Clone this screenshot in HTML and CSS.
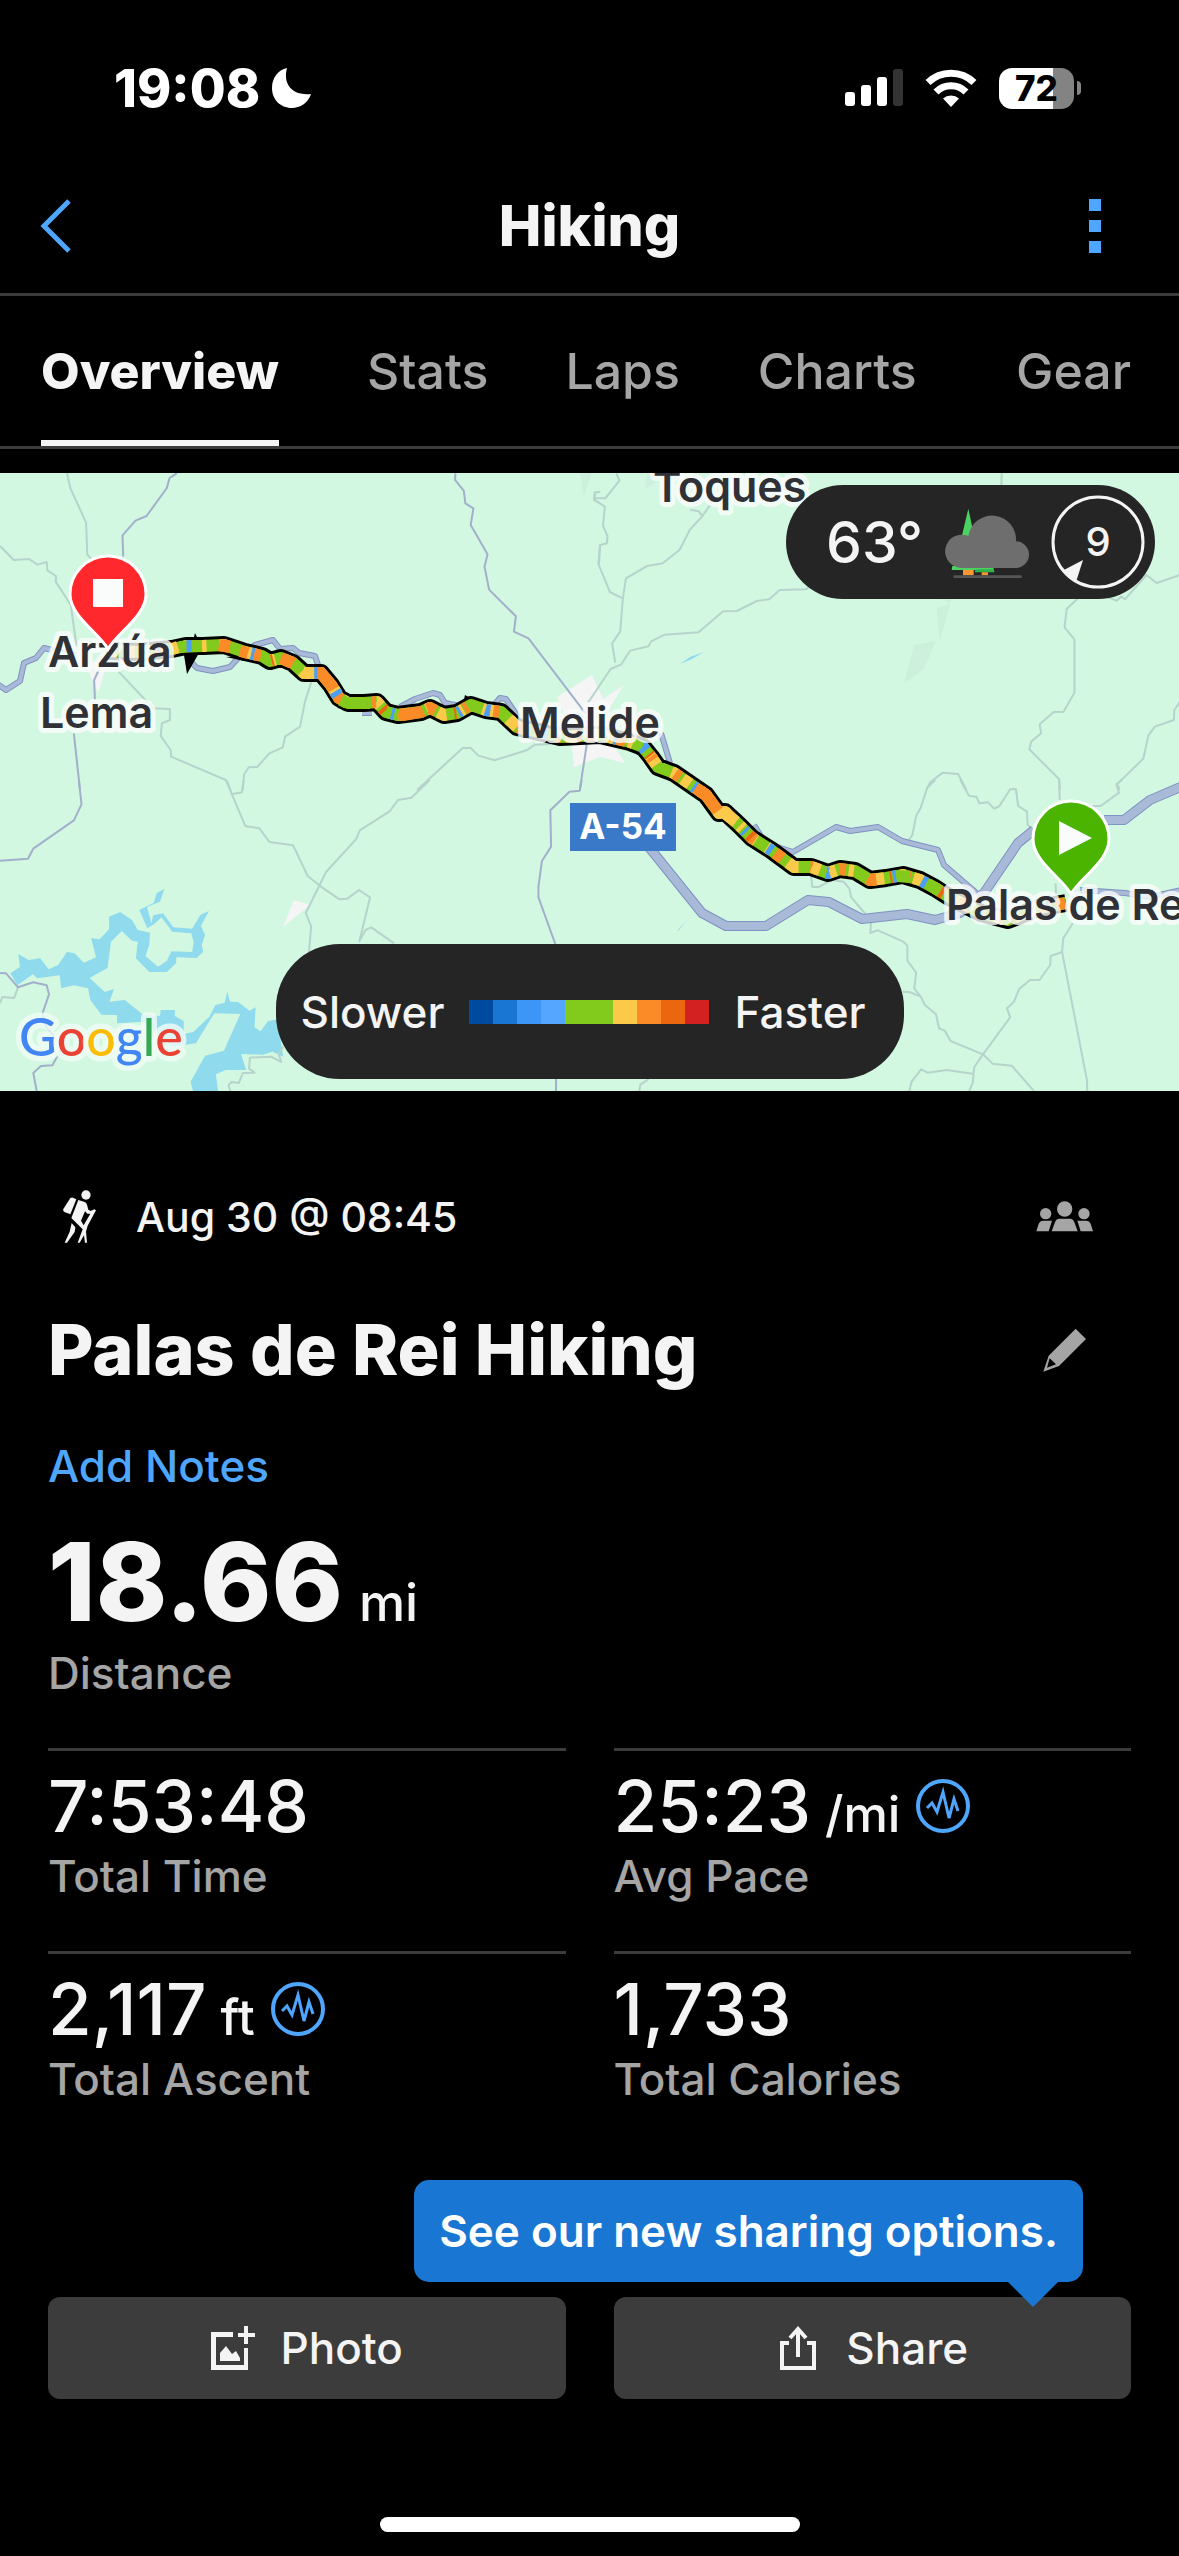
FILE: index.html
```html
<!DOCTYPE html>
<html lang="en">
<head>
<meta charset="utf-8">
<meta name="viewport" content="width=device-width, initial-scale=1">
<title>Hiking</title>
<link rel="stylesheet" href="styles.css">
</head>
<body>
<div class="status">
  <div class="status-left">
    <span class="time">19:08</span>
    <svg width="40" height="40" viewBox="0 0 40 40" aria-hidden="true"><path d="M15 0C11 14 18 28 39 26C36 35 28 40 20 40C8 40 0 31 0 20C0 10 6 2 15 0Z" fill="#fff"/></svg>
  </div>
  <div class="status-right">
    <svg width="58" height="38" viewBox="0 0 58 38" aria-hidden="true"><g fill="#fff"><rect y="23" width="10" height="14" rx="3"/><rect x="16" y="16" width="10" height="21" rx="3"/><rect x="32" y="8" width="10" height="29" rx="3"/><rect x="48" width="10" height="37" rx="3" fill="#333"/></g></svg>
    <svg width="52" height="38" viewBox="0 0 52 38" aria-hidden="true"><g fill="none" stroke="#fff" stroke-width="7"><path d="M3 13.500A33 33 0 0 1 49 13.500"/><path d="M11 23A21 21 0 0 1 41 23"/></g><path d="M26 38L18 29.500A12 12 0 0 1 34 29.500Z" fill="#fff"/></svg>
    <div class="battery"><span class="battery-body">72</span><span class="battery-tip"></span></div>
  </div>
</div>

<header class="header">
  <button class="icon-button" aria-label="Back"><svg width="32" height="54" viewBox="0 0 32 54"><path d="M29 2L4 27L29 52" fill="none" stroke="#4fa6ff" stroke-width="5"/></svg></button>
  <h1 class="header-title">Hiking</h1>
  <button class="icon-button more" aria-label="More"><svg width="12" height="54" viewBox="0 0 12 54"><path d="M0 0h12v12H0zM0 21h12v12H0zM0 42h12v12H0z" fill="#4fa6ff"/></svg></button>
</header>

<nav class="tabs">
  <a class="tab tab-active" href="#overview">Overview</a>
  <a class="tab" href="#stats">Stats</a>
  <a class="tab" href="#laps">Laps</a>
  <a class="tab" href="#charts">Charts</a>
  <a class="tab" href="#gear">Gear</a>
</nav>

<section class="map" aria-label="Route map">
  <svg class="map-canvas" viewBox="0 0 1179 618">
    <defs>
      <path id="route" d="M108 178L140 179L172 176L186 173L203 173L224 172L245 179L262 183L270 188L281 185L293 190L304 200L321 200L331 212L339 225L348 230L364 230L377 229L386 239L398 242L421 239L430 235L444 242L457 240L471 232L486 237L501 239L517 254L560 264L600 262L630 269L643 274L651 284L658 294L674 300L706 322L719 340L725 339L739 352L752 365L771 377L794 394L811 394L828 400L840 396L855 398L870 407L886 405L903 402L920 407L935 415L949 424L981 440L1008 447L1038 435L1066 430"/>
      <path id="pin" d="M0 0C-10 -17 -38 -33 -38 -55A38 38 0 0 1 38 -55C38 -33 10 -17 0 0Z"/>
      <path id="highway" d="M-4 210L6 217L20 208L24 190L36 185L44 175L52 177M190 188L197 195L213 198L230 194L240 183L255 172L273 167L280 176L293 175L299 180L315 183L319 195M362 240L372 240M400 234L415 226L433 220L440 222L445 230L465 234M494 232L500 225L506 226L518 244M661 260L670 290M754 352L765 370L793 379L836 354L850 358L878 354L902 368L938 377L944 392L980 423M1080 417L1125 420L1150 424L1190 415"/>
      <path id="motorway" d="M640 363L702 440L726 453L766 453L808 427L829 429L862 446L907 441L935 447L960 440L984 420L1018 370L1034 357M1104 347L1124 347L1150 327L1190 310"/>
    </defs>
    <g class="shade" transform="translate(580 -13) scale(.3827 .3333)"><path d="M932 443L968 430L940 543ZM873 555L930 543L900 625L846 672ZM945 417L970 420L968 432ZM0 40L30 40L10 108ZM175 40L205 40L200 65L170 88Z"/></g>
    <g class="town">
      <path d="M85 190L108 188L98 220ZM557 224L592 202L603 226L624 212L600 250L625 290L600 284L574 294L570 255ZM294 427L310 432L283 454Z"/>
    </g>
    <g class="water" transform="translate(0 307) scale(.3827 .3333)">
      <path d="M48 522L75 540L105 535L127 568L152 555L175 516L195 520L219 548L251 532L238 474L260 478L285 448L285 410L314 396L345 420L360 450L392 458L390 495L380 528L413 560L436 542L448 514L502 516L506 487L500 460L450 455L422 412L403 432L385 445L364 390L402 368L409 340L430 326L418 365L384 381L396 430L400 406L426 400L453 442L502 446L524 404L546 393L525 438L536 465L527 495L531 515L514 534L461 532L460 550L436 576L390 576L355 535L360 485L345 482L318 453L290 485L281 564L234 594L274 636L298 627L286 665L326 660L375 705L418 708L420 690L457 690L457 708L480 723L480 762L505 756L547 710L563 675L587 668L594 635L601 665L622 666L652 692L668 682L665 742L681 754L700 724L725 718L740 830L712 815L686 824L630 822L643 870L590 870L564 883L570 933L504 933L498 905L536 827L585 812L628 702L560 700L512 790L450 800L375 725L306 730L306 705L265 704L236 660L230 625L193 616L160 625L156 586L97 595L86 583L45 616L27 580L52 561Z"/>
    </g>
    <g class="water"><path d="M680 191L690 184L704 179L692 186ZM677 458L687 447L679 457Z"/></g>

    <g class="minor" transform="translate(0 -13) scale(.3827 .3333)">
      <path d="M175 40L184 85L225 188L228 283L240 300M0 258L36 300L76 297L98 314L122 306L124 331L146 348L146 366L185 435L200 560M310 635L400 745L444 747L444 780L423 790L420 828L446 870L447 890L590 960L602 990M815 660L797 725L784 800L745 830L739 862L704 880L672 921L650 922L638 943L634 990M1090 990L1209 864L1230 864L1250 887L1292 901L1376 871L1398 854L1440 852M1568 95L1554 98L1552 120L1568 130M1568 255L1565 315"/>
    </g>
    <g class="minor" transform="translate(580 -13) scale(.3827 .3333)">
      <path d="M95 40L103 62L66 115L38 115L40 95M38 120L65 140L60 198L72 228L70 250L52 256L48 312L78 396L112 415M340 135L320 168L288 208L260 270L216 310L176 318L120 355L112 415L105 515L84 550L92 608M320 168L310 154L288 149M600 380L590 388L522 390L494 418L462 423L410 453L374 454L310 517L221 524L186 544L179 559L131 572L108 613L80 627L20 730M1102 40L1101 80M1568 345L1507 369L1480 345L1424 418L1415 410L1402 422L1380 412M1300 416L1272 446L1266 502L1292 538L1292 698L1263 756L1238 756L1201 793L1205 820L1179 845L1174 868L1252 958L1254 990M1568 725L1553 750L1552 780L1502 800L1485 827L1472 896L1404 972L1410 990M907 985L915 967L948 938L988 942L1010 990"/>
    </g>
    <g class="minor" transform="translate(0 307) scale(.3827 .3333)">
      <path d="M592 0L606 43L632 37L637 0M606 43L641 138L678 145L704 186L766 196L804 288L834 316L887 358L908 356L938 330L967 352L939 484L955 450L970 442L1030 490M1123 0L1075 53L1040 60L1018 94L940 151L931 177L852 276L799 399L813 439L807 520M0 670L6 651L37 654L47 622M740 800L728 822L735 846L708 830L653 833L651 866L665 878L635 879L624 909L605 906L597 916L602 933"/>
    </g>
    <g class="minor" transform="translate(580 307) scale(.382 .3333)">
      <path d="M930 0L909 23L892 83L880 108L870 165L860 182M995 0L1019 48L1038 50L1045 70L1068 67L1084 86L1098 78L1126 28L1141 27L1147 78L1170 95L1172 135L1182 145M1254 0L1256 60M1418 0L1404 13L1411 38L1363 78L1340 78M605 285L608 321L626 321L660 300L690 305L705 325L710 352L747 402L762 425L760 459L780 451L845 484L857 497L857 542L880 578L875 625L892 650L903 675L932 703L940 745L955 752L970 783L1055 823L1080 851L1130 857L1188 933M845 635L862 636L892 650M1290 430L1265 475L1262 516L1232 528L1231 555L1203 600L1178 600L1150 627L1136 665L1118 685L1126 712L1055 823L1032 862L1028 909L1019 933M1028 881L960 870L910 878L893 868L868 905L862 933M1262 516L1327 900L1328 933M1245 310L1246 340M155 933L158 914L180 897"/>
    </g>
    <g class="major" transform="translate(0 -13) scale(.3827 .3333)">
      <path d="M462 40L443 54L436 84L383 168L354 182L320 226L322 290M1190 40L1189 60L1212 93L1216 130L1237 145L1230 195L1274 283L1266 320L1278 389L1348 469L1343 515L1381 535L1530 760M258 630L246 660L248 720M193 820L209 990M1535 840L1515 990M130 565L200 580"/>
    </g>
    <g class="major" transform="translate(0 307) scale(.3827 .3333)">
      <path d="M206 0L213 73L193 121L87 206L73 236L0 242M0 579L16 580L47 622L87 607L122 616L128 643L111 700L120 740L163 800L137 856L107 858L87 879L96 933M1520 0L1515 32L1488 35L1438 91L1440 200L1416 243L1407 320L1407 352L1451 492M1453 895L1453 933"/>
    </g>
    <use href="#highway" class="highway-edge"/>
    <use href="#highway" class="highway-fill"/>
    <use href="#motorway" class="motorway-edge"/>
    <use href="#motorway" class="motorway-fill"/>

    <path d="M184 182L187 201L199 180ZM193 168L195 160L199 168ZM463 231L465 222L476 228ZM337 235L345 230L344 236ZM392 245L398 251L404 244ZM636 277L637 282L645 281ZM226 184L244 188L250 182Z"/>
    <use href="#route" class="route-outline"/>
    <use href="#route" class="route-base"/>
    <use href="#route" class="route-yellow"/>
    <use href="#route" class="route-orange"/>
    <use href="#route" class="route-deep"/>
    <g class="route-segment">
      <path class="seg-orange" d="M307 200L321 200L331 212L336 220M403 242L421 239L423 238M694 314L706 322L718 338M219 172L230 174M240 178L248 180M281 185L290 189"/>
      <path class="seg-yellow" d="M305 200L317 200M334 216L337 221M172 176L178 174M722 338L736 349M812 394L820 397M510 247L517 254"/>
      <path class="seg-green" d="M179 174L202 173M386 239L398 242M341 227L347 230M353 230L370 230M897 403L910 404M928 411L940 418"/>
    </g>
    <use href="#route" class="route-blue"/>

    <g class="label">
      <text x="48" y="194">Arzúa</text>
      <text x="40" y="255">Lema</text>
      <text x="520" y="265">Melide</text>
      <text x="653" y="29">Toques</text>
      <text x="946" y="447">Palas de Rei</text>
    </g>
    <rect x="570" y="330" width="106" height="48" fill="#3a78c8"/>
    <text class="shield" x="623" y="366">A-54</text>
    <g transform="translate(108 176)"><use href="#pin" class="pin" fill="#ff282d"/><rect x="-15" y="-70" width="30" height="28" fill="#fafcfb"/></g>
    <g transform="translate(1071 421)"><use href="#pin" class="pin" fill="#4ab400"/><path d="M-12 -73L21 -56L-12 -39Z" fill="#fafcfb"/></g>
    <text class="google" x="19" y="583"><tspan fill="#4285f4">G</tspan><tspan fill="#ea4335">o</tspan><tspan fill="#fbbc05">o</tspan><tspan fill="#4285f4">g</tspan><tspan fill="#34a853">l</tspan><tspan fill="#ea4335">e</tspan></text>
  </svg>

  <div class="weather">
    <span class="temperature">63°</span>
    <svg width="84" height="72" viewBox="0 0 252 216" aria-label="Cloudy"><path d="M70 8L88 92H50Z" fill="#4cd263"/><path d="M22 180H118V192H20ZM94 186H145L148 198H90Z" fill="#4cd263"/><path d="M94 190H145L148 199H90Z" fill="#2fb24a"/><path d="M54 192h32v16H54zM110 199h19v9h-19z" fill="#fa9632"/><rect x="25" y="208" width="206" height="8" rx="4" fill="#555"/><path d="M50 186A50 50 0 1 1 70 90A72 72 0 0 1 213 106A40 40 0 0 1 211 186Z" fill="#6e6e6e"/></svg>
    <span class="wind"><svg class="wind-ring" viewBox="0 0 94 94" aria-hidden="true"><circle cx="47" cy="47" r="45" fill="none" stroke="#f4f4f4" stroke-width="3"/><path d="M32 65L11 76L25 87Z" fill="#f4f4f4"/></svg>9</span>
  </div>
  <div class="legend">
    <span>Slower</span>
    <span class="scale" aria-hidden="true"><i class="c1"></i><i class="c2"></i><i class="c3"></i><i class="c4"></i><i class="c5"></i><i class="c6"></i><i class="c7"></i><i class="c8"></i><i class="c9"></i></span>
    <span>Faster</span>
  </div>
</section>

<main class="details">
  <div class="date-row">
    <svg class="hiker" width="33" height="54" viewBox="38 32 99 162" aria-hidden="true"><g fill="#f4f4f4"><circle cx="107" cy="47" r="14"/><path d="M60 56Q64 53 68 55L78 60L60 105L42 98Q37 95 39 89Z"/><path d="M84 62L103 68Q108 70 110 76L114 91L121 95L132 90L137 93L112 139L107 157L110 190H104L101 168L88 190H82L97 150L63 116ZM104 96L92 124L100 138L120 103L111 103Z" fill-rule="evenodd"/><path d="M64 131L75 144L73 158L50 190H43L58 157Z"/></g></svg>
    <time>Aug 30 @ 08:45</time>
    <button class="icon-button people" aria-label="Privacy"><svg width="58" height="32" viewBox="0 0 174 96"><g fill="#a5a5a5"><circle cx="86" cy="24" r="23"/><circle cx="29" cy="38" r="17"/><circle cx="144" cy="38" r="17"/><path d="M47 91L56 66Q60 53 70 53H102Q112 53 116 66L125 91ZM1 91L8 68Q12 59 20 59H48L38 91ZM171 91L164 68Q160 59 152 59H124L134 91Z"/></g></svg></button>
  </div>
  <div class="title-row">
    <h2 class="title">Palas de Rei Hiking</h2>
    <button class="icon-button pencil" aria-label="Edit name"><svg width="44" height="44" viewBox="0 0 132 132"><path d="M98 2L129 33L48 114L1 131L17 83ZM20 91L12 119L39 109Z" fill="#a5a5a5" fill-rule="evenodd"/></svg></button>
  </div>
  <a class="notes" href="#notes">Add Notes</a>
  <div class="distance"><span class="distance-value">18.66</span><span class="distance-unit">mi</span></div>
  <div class="stat-label">Distance</div>

  <div class="stats">
    <div class="stat">
      <div class="stat-value">7:53:48</div>
      <div class="stat-label">Total Time</div>
    </div>
    <div class="stat">
      <div class="stat-value">25:23<span class="unit">/mi</span><button class="icon-button chart" aria-label="Pace chart"><svg width="54" height="54" viewBox="0 0 54 54"><g fill="none" stroke="#4fa6ff"><circle cx="27" cy="27" r="25" stroke-width="4"/><path d="M11 29L16 24L21 33L27 13L33 39L38 20L42 32" stroke-width="3"/></g></svg></button></div>
      <div class="stat-label">Avg Pace</div>
    </div>
    <div class="stat">
      <div class="stat-value">2,117<span class="unit">ft</span><button class="icon-button chart" aria-label="Ascent chart"><svg width="54" height="54" viewBox="0 0 54 54"><g fill="none" stroke="#4fa6ff"><circle cx="27" cy="27" r="25" stroke-width="4"/><path d="M11 29L16 24L21 33L27 13L33 39L38 20L42 32" stroke-width="3"/></g></svg></button></div>
      <div class="stat-label">Total Ascent</div>
    </div>
    <div class="stat">
      <div class="stat-value">1,733</div>
      <div class="stat-label">Total Calories</div>
    </div>
  </div>

  <div class="actions">
    <button class="action"><svg width="44" height="45" viewBox="0 0 44 45" aria-hidden="true"><g fill="#f4f4f4"><path d="M0 6H22V11H5V39H33V22H37V44H0Z"/><path d="M33 0H37V7H44V11H37V18H33V11H27V7H33Z"/><path d="M9 27L15 20L21 28L25 25L29 32V35H9Z"/></g></svg>Photo</button>
    <div class="share-wrap">
      <button class="action"><svg width="44" height="45" viewBox="-4 0 44 45" aria-hidden="true"><g fill="none" stroke="#f4f4f4" stroke-width="4"><path d="M9 17H2V42H34V17H27M18 31V3M10 12L18 3L26 12"/></g></svg>Share</button>
      <div class="tooltip" role="status">See our new sharing options.</div>
    </div>
  </div>
</main>
<div class="home-bar"></div>
</body>
</html>
```

FILE: styles.css
```css
* { box-sizing: border-box; }

body {
  margin: 0;
  background: #000;
  color: #f4f4f4;
  font-family: Inter, "Liberation Sans", sans-serif;
}

button { font: inherit; color: inherit; border: 0; cursor: pointer; }
svg { display: block; }
.icon-button { background: none; padding: 0; }

/* Status bar */
.status {
  display: flex;
  justify-content: space-between;
  align-items: center;
  height: 158px;
  padding: 18px 98px 0 114px;
  color: #fff;
}
.status-left { display: flex; align-items: center; gap: 12px; }
.time { font-size: 52px; font-weight: 800; }
.status-right { display: flex; align-items: center; gap: 22px; }
.battery { display: flex; align-items: center; gap: 3px; }
.battery-body {
  width: 75px;
  height: 41px;
  border-radius: 13px;
  background: linear-gradient(90deg, #fff 72%, #838383 72%);
  color: #000;
  font-size: 35px;
  font-weight: 800;
  line-height: 41px;
  text-align: center;
}
.battery-tip { width: 4px; height: 14px; border-radius: 0 4px 4px 0; background: #838383; }

/* Header */
.header {
  display: grid;
  grid-template-columns: 1fr auto 1fr;
  justify-items: start;
  align-items: center;
  height: 138px;
  padding: 0 40px;
  border-bottom: 3px solid #3c3c3c;
}
.header-title { margin: 0; font-size: 57px; font-weight: 800; line-height: 68px; }
.more { justify-self: end; margin-right: 38px; }

.tabs {
  display: grid;
  grid-template-columns: 327fr 199fr 193fr 259fr 112fr;
  justify-items: start;
  height: 153px;
  padding: 0 48px 0 41px;
  border-bottom: 3px solid #3c3c3c;
  margin-bottom: 24px;
}
.tab {
  color: #a5a5a5;
  font-size: 50px;
  font-weight: 500;
  line-height: 150px;
  text-decoration: none;
  white-space: nowrap;
}
.tab-active { color: #f4f4f4; font-weight: 800; box-shadow: inset 0 -6px #f4f4f4; }

/* Map */
.map { position: relative; overflow: hidden; background: #d2f8e1; }
.map-canvas { width: 100%; height: auto; }
.map-canvas path { vector-effect: non-scaling-stroke; }
.shade { fill: #cdf0dc; }
.town { fill: #f5f5f5; }
.water { fill: #90daee; }
.minor { fill: none; stroke: #b6d3cc; stroke-width: 2; stroke-linejoin: round; }
.major { fill: none; stroke: #a2b0cb; stroke-width: 2; stroke-linejoin: round; }
.highway-edge { fill: none; stroke: #7f92c1; stroke-width: 6; stroke-linejoin: round; }
.highway-fill { fill: none; stroke: #a9b9d8; stroke-width: 4; stroke-linejoin: round; }
.motorway-edge { fill: none; stroke: #7f92c1; stroke-width: 10; stroke-linejoin: round; }
.motorway-fill { fill: none; stroke: #a9b9d8; stroke-width: 8; stroke-linejoin: round; }
.route-outline, .route-base, .route-yellow, .route-orange, .route-blue, .route-deep { fill: none; stroke-linejoin: round; }
.route-outline { stroke: #000; stroke-width: 18; }
.route-base { stroke: #82cb1c; stroke-width: 12; }
.route-yellow { stroke: #fbca4b; stroke-width: 12; stroke-dasharray: 9 13 5 21 12 17 4 9; }
.route-orange { stroke: #fa8b27; stroke-width: 12; stroke-dasharray: 0 15 6 24 9 31 4 12; }
.route-blue { stroke: #4d9ff5; stroke-width: 12; stroke-dasharray: 0 49 3 27 5 61 3 18; }
.route-deep { stroke: #eb670f; stroke-width: 12; stroke-dasharray: 0 36 2 52 4 73 2 41; }
.route-segment { fill: none; stroke-width: 12; }
.seg-orange { stroke: #fa8b27; }
.seg-yellow { stroke: #fbca4b; }
.seg-green { stroke: #82cb1c; }
.label {
  fill: #2f3136;
  stroke: rgba(250, 252, 252, 0.82);
  stroke-width: 10;
  stroke-linejoin: round;
  paint-order: stroke;
  font-size: 43px;
  font-weight: 600;
}
.shield { fill: #fff; font-size: 35px; font-weight: 700; text-anchor: middle; }
.pin { stroke: #fff; stroke-width: 3; }
.google {
  font-family: Lato, "Liberation Sans", sans-serif;
  font-size: 52px;
  font-weight: 500;
  stroke: rgba(240, 251, 245, 0.8);
  stroke-width: 11;
  stroke-linejoin: round;
  paint-order: stroke;
}

.weather {
  position: absolute;
  top: 12px;
  right: 24px;
  display: flex;
  align-items: center;
  gap: 22px;
  height: 114px;
  padding: 0 10px 0 40px;
  border-radius: 57px;
  background: #252525;
}
.temperature { font-size: 57px; font-weight: 500; }
.wind {
  position: relative;
  width: 94px;
  height: 94px;
  font-size: 40px;
  font-weight: 500;
  line-height: 94px;
  text-align: center;
}
.wind-ring { position: absolute; inset: 0; }
.legend {
  position: absolute;
  bottom: 12px;
  left: 50%;
  display: flex;
  align-items: center;
  gap: 25px;
  width: 628px;
  height: 135px;
  padding-left: 25px;
  border-radius: 64px;
  background: #252525;
  font-size: 44px;
  font-weight: 500;
  transform: translateX(-50%);
}
.scale { display: grid; grid-template-columns: repeat(4, 24px) 48px repeat(4, 24px); height: 24px; }
.c1 { background: #004a9f; }
.c2 { background: #1976d2; }
.c3 { background: #3c96f8; }
.c4 { background: #55a6ff; }
.c5 { background: #82cb1c; }
.c6 { background: #fbca4b; }
.c7 { background: #fa8b27; }
.c8 { background: #eb670f; }
.c9 { background: #d32020; }

/* Details */
.details { padding: 96px 48px 0; }
.date-row, .title-row { display: flex; align-items: center; }
.date-row {
  height: 60px;
  gap: 40px;
  padding: 0 37px 0 15px;
  font-size: 41px;
  font-weight: 500;
}
.people, .pencil { margin-left: auto; }
.title-row { height: 86px; margin-top: 60px; padding-right: 44px; }
.title { margin: 0; font-size: 70px; font-weight: 800; line-height: 86px; }
.notes {
  display: block;
  width: max-content;
  margin-top: 43px;
  color: #4fa6ff;
  font-size: 44px;
  font-weight: 500;
  line-height: 60px;
  text-decoration: none;
}
.distance {
  display: flex;
  align-items: baseline;
  gap: 16px;
  height: 110px;
  margin-top: 31px;
  line-height: 110px;
}
.distance-value { font-size: 108px; font-weight: 800; }
.distance-unit { font-size: 52px; font-weight: 500; }
.distance + .stat-label { margin-top: 8px; }
.stat-label { color: #a5a5a5; font-size: 44px; font-weight: 500; line-height: 56px; }
.stats {
  display: grid;
  grid-template-columns: 1fr 1fr;
  column-gap: 48px;
  margin-top: 47px;
}
.stat { padding: 13px 0 47px; border-top: 3px solid #3c3c3c; }
.stat-value {
  display: flex;
  align-items: baseline;
  height: 84px;
  font-size: 71px;
  font-weight: 500;
  line-height: 84px;
}
.unit { margin-left: 14px; font-size: 50px; }
.chart { align-self: center; margin-left: 16px; }

.actions {
  display: grid;
  grid-template-columns: 1fr 1fr;
  gap: 48px;
  margin-top: 143px;
}
.action {
  display: flex;
  align-items: center;
  justify-content: center;
  gap: 26px;
  width: 100%;
  height: 102px;
  border-radius: 12px;
  background: #3c3c3c;
  font-size: 44px;
  font-weight: 500;
}
.share-wrap { position: relative; }
.tooltip {
  position: absolute;
  right: 48px;
  bottom: calc(100% + 15px);
  padding: 0 25px;
  border-radius: 15px;
  background: #1976d2;
  color: #fff;
  font-size: 44px;
  font-weight: 600;
  line-height: 102px;
  white-space: nowrap;
}
.tooltip::after {
  content: "";
  position: absolute;
  top: 100%;
  right: 25px;
  border: 25px solid transparent;
  border-top-color: #1976d2;
  border-bottom: 0;
}
.home-bar { width: 420px; height: 15px; margin: 118px auto 24px; border-radius: 8px; background: #fff; }
```
